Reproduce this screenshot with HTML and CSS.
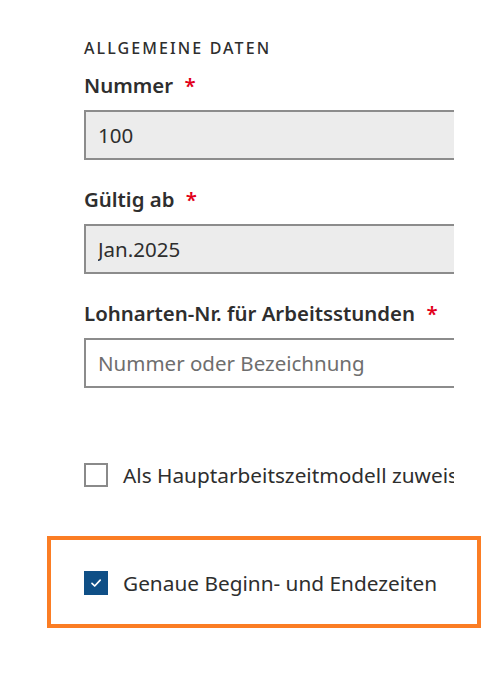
FILE: index.html
```html
<!DOCTYPE html>
<html lang="de">
<head>
    <meta charset="UTF-8">
    <meta name="viewport" content="width=device-width, initial-scale=1.0">
    <title>Arbeitszeitmodell</title>
    <link rel="stylesheet" href="styles.css">
</head>
<body>
    <div class="form">
        <h2 class="section-title">Allgemeine Daten</h2>

        <div class="field">
            <label class="field-label">Nummer <span class="required">*</span></label>
            <div class="input-clip">
                <input class="text-input readonly" type="text" value="100" readonly>
            </div>
        </div>

        <div class="field">
            <label class="field-label">Gültig ab <span class="required">*</span></label>
            <div class="input-clip">
                <input class="text-input readonly" type="text" value="Jan.2025" readonly>
            </div>
        </div>

        <div class="field">
            <label class="field-label">Lohnarten-Nr. für Arbeitsstunden <span class="required">*</span></label>
            <div class="input-clip">
                <input class="text-input" type="text" placeholder="Nummer oder Bezeichnung">
            </div>
        </div>

        <div class="check-row clipped">
            <span class="checkbox"></span>
            <span class="check-text">Als Hauptarbeitszeitmodell zuweisen</span>
        </div>
    </div>

    <div class="highlight">
        <div class="check-row">
            <span class="checkbox checked">
                <svg width="14" height="14" viewBox="0 0 14 14">
                    <path d="M3 7.4 L5.7 10 L11.2 4.2" fill="none" stroke="#fff" stroke-width="1.7" stroke-linecap="round" stroke-linejoin="round"/>
                </svg>
            </span>
            <span class="check-text">Genaue Beginn- und Endezeiten</span>
        </div>
    </div>
</body>
</html>
```

FILE: styles.css
```css
body {
    margin: 0;
    background-color: #fff;
    font-family: "Noto Sans", "Open Sans", sans-serif;
    color: #2e2e2e;
}

.form {
    padding: 36px 0 0 84px;
    width: 370px;
}

.section-title {
    margin: 0;
    font-size: 16px;
    line-height: 24px;
    font-weight: 500;
    letter-spacing: 2.1px;
    text-transform: uppercase;
    color: #2e2e2e;
}

.field {
    margin-top: 12px;
}

.field + .field {
    margin-top: 26px;
}

.field-label {
    display: block;
    font-size: 20.4px;
    line-height: 26px;
    font-weight: 600;
    color: #2e2e2e;
}

.required {
    color: #e2001a;
    margin-left: 6px;
}

.input-clip {
    margin-top: 12px;
    overflow: hidden;
}

.text-input {
    display: block;
    box-sizing: border-box;
    width: 480px;
    height: 50px;
    padding: 0 12px;
    border: 2px solid #8c8c8c;
    border-radius: 0;
    background-color: #fff;
    font-family: inherit;
    font-size: 20.5px;
    color: #2e2e2e;
    outline: none;
}

.text-input.readonly {
    background-color: #ececec;
}

.text-input::placeholder {
    color: #6e6e6e;
}

.check-row {
    display: flex;
    align-items: center;
    gap: 15px;
    white-space: nowrap;
}

.clipped {
    margin-top: 74px;
    overflow: hidden;
}

.checkbox {
    flex: none;
    display: flex;
    align-items: center;
    justify-content: center;
    box-sizing: border-box;
    width: 24px;
    height: 24px;
    border: 2px solid #8a8a8a;
    background-color: #fff;
}

.checkbox.checked {
    border-color: #0f4f86;
    background-color: #0f4f86;
}

.check-text {
    font-size: 20.8px;
    line-height: 26px;
    color: #2e2e2e;
}

.highlight {
    margin: 48px 0 0 47px;
    width: 434px;
    height: 92px;
    box-sizing: border-box;
    border: 4px solid #fb7d24;
    padding: 30px 0 0 33px;
}
```
